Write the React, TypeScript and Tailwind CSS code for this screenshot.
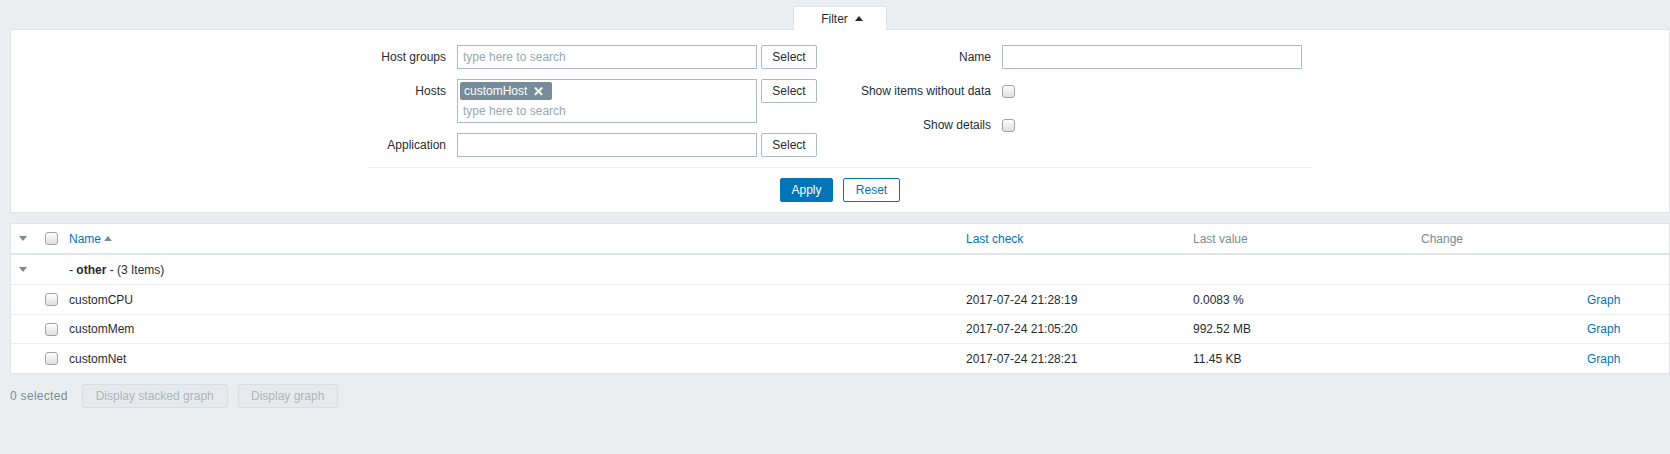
import React from "react"

function Checkbox() {
  return (
    <span className="inline-block h-[13px] w-[13px] rounded-[3px] border border-[#a3a3a3] bg-linear-to-b from-white to-[#dedede]" />
  )
}

function ArrowDown() {
  return <span className="inline-block h-0 w-0 border-x-[4px] border-t-[5px] border-x-transparent border-t-[#768d99]" />
}

function ArrowUp({ color }: { color: string }) {
  return <span className={`inline-block h-0 w-0 border-x-[4px] border-b-[5px] border-x-transparent ${color}`} />
}

function SelectButton() {
  return (
    <button className="ml-[4px] h-[24px] w-[56px] rounded-[2px] border border-[#acbbc2] bg-white text-[#1f2c33]">
      Select
    </button>
  )
}

const cols = "grid grid-cols-[29px_24px_897px_227px_228px_166px_1fr]"

const items = [
  { name: "customCPU", check: "2017-07-24 21:28:19", value: "0.0083 %", h: "h-[30px]" },
  { name: "customMem", check: "2017-07-24 21:05:20", value: "992.52 MB", h: "h-[29px]" },
  { name: "customNet", check: "2017-07-24 21:28:21", value: "11.45 KB", h: "h-[29px]" },
]

export default function App() {
  return (
    <div className="h-[454px] bg-[#ebeef0] pl-[10px] pt-[6px] font-['Liberation_Sans',Arial,sans-serif] text-[12px] text-[#1f2c33]">
      {/* filter tab */}
      <div className="flex justify-center">
        <div className="relative z-10 -mb-px flex h-[24px] w-[94px] items-center justify-center gap-[7px] border border-b-0 border-[#dfe4e7] bg-white pl-[4px]">
          <span>Filter</span>
          <ArrowUp color="border-b-[#1f2c33]" />
        </div>
      </div>

      {/* filter panel */}
      <div className="border border-[#dfe4e7] bg-white pb-[10px] pt-[15px]">
        <div className="mx-auto w-[942px]">
          <div className="flex">
            <div className="flex w-[471px] flex-col gap-[10px]">
              <div className="flex h-[24px] items-center">
                <label className="w-[77px] text-right">Host groups</label>
                <div className="ml-[11px] flex h-[24px] w-[300px] items-center border border-[#acbbc2] px-[5px] text-[#98a8b0]">
                  type here to search
                </div>
                <SelectButton />
              </div>
              <div className="flex items-start">
                <label className="flex h-[24px] w-[77px] items-center justify-end">Hosts</label>
                <div className="ml-[11px] flex h-[44px] w-[300px] flex-col border border-[#acbbc2] px-[2px] pt-[2px]">
                  <span className="flex h-[18px] w-[92px] items-center gap-[6px] rounded-[2px] bg-[#768d99] pl-[4px] text-white">
                    customHost
                    <span className="text-[13px] font-bold leading-none">✕</span>
                  </span>
                  <span className="mt-[2px] pl-[3px] leading-[18px] text-[#98a8b0]">type here to search</span>
                </div>
                <SelectButton />
              </div>
              <div className="flex h-[24px] items-center">
                <label className="w-[77px] text-right">Application</label>
                <div className="ml-[11px] h-[24px] w-[300px] border border-[#acbbc2]" />
                <SelectButton />
              </div>
            </div>
            <div className="flex w-[471px] flex-col gap-[10px]">
              <div className="flex h-[24px] items-center">
                <label className="w-[151px] text-right">Name</label>
                <div className="ml-[11px] h-[24px] w-[300px] border border-[#acbbc2]" />
              </div>
              <div className="flex h-[24px] items-center">
                <label className="w-[151px] text-right">Show items without data</label>
                <span className="ml-[11px] flex">
                  <Checkbox />
                </span>
              </div>
              <div className="flex h-[24px] items-center">
                <label className="w-[151px] text-right">Show details</label>
                <span className="ml-[11px] flex">
                  <Checkbox />
                </span>
              </div>
            </div>
          </div>
          <div className="mt-[10px] border-t border-[#ebeef0]" />
          <div className="mt-[10px] flex justify-center gap-[10px]">
            <button className="h-[24px] w-[53px] rounded-[2px] border border-[#0275b8] bg-[#0275b8] text-white">Apply</button>
            <button className="h-[24px] w-[57px] rounded-[2px] border border-[#0275b8] bg-white text-[#0275b8]">Reset</button>
          </div>
        </div>
      </div>

      {/* items table */}
      <div className="mt-[10px] border border-[#dfe4e7] bg-white">
        <div className={`${cols} h-[31px] items-center border-b-2 border-[#dfe4e7]`}>
          <span className="flex pl-[8px]">
            <ArrowDown />
          </span>
          <span className="flex pl-[5px]">
            <Checkbox />
          </span>
          <span className="flex items-center gap-[3px] pl-[5px] text-[#0275b8]">
            Name
            <ArrowUp color="border-b-[#768d99]" />
          </span>
          <span className="pl-[5px] text-[#0275b8]">Last check</span>
          <span className="pl-[5px] text-[#768d99]">Last value</span>
          <span className="pl-[5px] text-[#768d99]">Change</span>
          <span />
        </div>
        <div className={`${cols} h-[30px] items-center border-b border-[#ebeef0]`}>
          <span className="flex pl-[8px]">
            <ArrowDown />
          </span>
          <span />
          <span className="pl-[5px]">
            - <b>other</b> - (3 Items)
          </span>
        </div>
        {items.map((it, i) => (
          <div
            key={it.name}
            className={`${cols} ${it.h} items-center ${i < items.length - 1 ? "border-b border-[#ebeef0]" : ""}`}
          >
            <span />
            <span className="flex pl-[5px]">
              <Checkbox />
            </span>
            <span className="pl-[5px]">{it.name}</span>
            <span className="pl-[5px]">{it.check}</span>
            <span className="pl-[5px]">{it.value}</span>
            <span />
            <span className="pl-[5px] text-[#0275b8]">Graph</span>
          </div>
        ))}
      </div>

      {/* footer actions */}
      <div className="mt-[10px] flex items-center">
        <span className="tracking-[0.3px] text-[#768d99]">0 selected</span>
        <button className="ml-[14px] h-[24px] w-[146px] rounded-[2px] border border-[#d8dee2] bg-[#e7eaec] text-[#a9b7be]">
          Display stacked graph
        </button>
        <button className="ml-[10px] h-[24px] w-[100px] rounded-[2px] border border-[#d8dee2] bg-[#e7eaec] text-[#a9b7be]">
          Display graph
        </button>
      </div>
    </div>
  )
}
